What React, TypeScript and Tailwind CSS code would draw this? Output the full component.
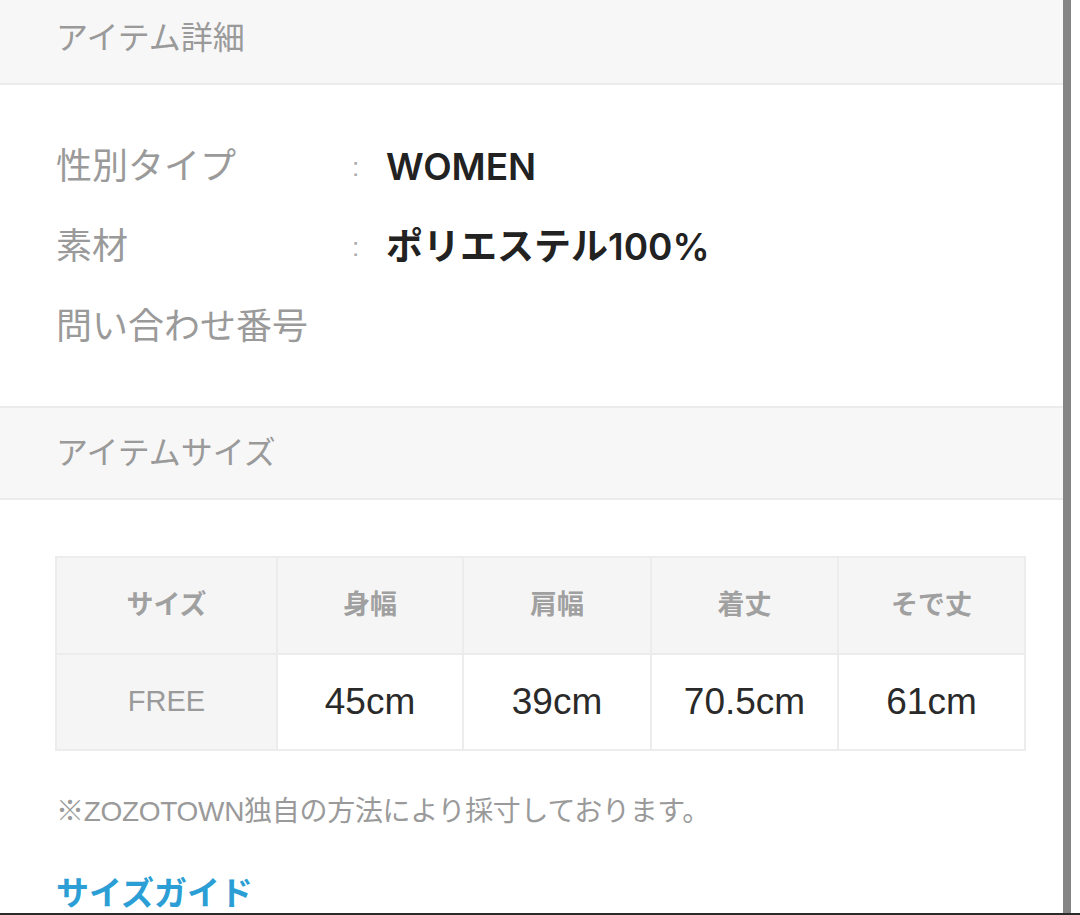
const FONT = { fontFamily: '"Liberation Sans", "Noto Sans CJK JP", sans-serif' }
const VALUE_FONT = { fontFamily: 'Inter, "Noto Sans CJK JP", sans-serif' }

const DETAILS = [
  { label: '性別タイプ', value: 'WOMEN' },
  { label: '素材', value: 'ポリエステル100%' },
  { label: '問い合わせ番号', value: '' },
]

const COLUMNS = ['身幅', '肩幅', '着丈', 'そで丈']
const SIZES = [{ size: 'FREE', values: ['45cm', '39cm', '70.5cm', '61cm'] }]

function SectionHeader({ title, className = '' }: { title: string; className?: string }) {
  return (
    <div className={`flex items-center bg-[#f7f7f7] pl-14 text-[32px] text-[#9a9a9a] ${className}`}>
      {title}
    </div>
  )
}

export default function App() {
  return (
    <div className="flex h-[915px] flex-col overflow-hidden bg-white" style={FONT}>
      <div className="flex min-h-0 flex-1">
        <div className="flex w-[1063px] flex-col">
          <SectionHeader title="アイテム詳細" className="h-[85px] shrink-0 border-b-2 border-[#ebebeb] pb-[8px]" />

          <div className="flex flex-col pt-[42px] pb-[39px] pl-14">
            {DETAILS.map((row) => (
              <div key={row.label} className="flex h-20 items-center">
                <div className="w-[296px] text-[36px] text-[#9a9a9a]">{row.label}</div>
                {row.value && (
                  <>
                    <div className="w-[34px] text-[26px] text-[#aaaaaa]">:</div>
                    <div className="text-[37px] font-semibold text-[#222]" style={VALUE_FONT}>
                      {row.value}
                    </div>
                  </>
                )}
              </div>
            ))}
          </div>

          <SectionHeader title="アイテムサイズ" className="h-[94px] shrink-0 border-y-2 border-[#ebebeb]" />

          <div className="pt-[56px] pr-14 pl-[55px]">
            <table className="w-[969px] table-fixed border-collapse text-center">
              <colgroup>
                <col className="w-[221px]" />
                <col className="w-[186px]" />
                <col className="w-[188px]" />
                <col className="w-[187px]" />
                <col className="w-[187px]" />
              </colgroup>
              <thead>
                <tr className="h-[97px] bg-[#f5f5f5]">
                  <th className="border-2 border-[#ececec] text-[27px] font-semibold text-[#a0a0a0]">サイズ</th>
                  {COLUMNS.map((col) => (
                    <th key={col} className="border-2 border-[#ececec] text-[27px] font-semibold text-[#a0a0a0]">
                      {col}
                    </th>
                  ))}
                </tr>
              </thead>
              <tbody>
                {SIZES.map((row) => (
                  <tr key={row.size} className="h-[96px]">
                    <td className="border-2 border-[#ececec] bg-[#f5f5f5] text-[29px] text-[#9a9a9a]">{row.size}</td>
                    {row.values.map((v, i) => (
                      <td key={i} className="border-2 border-[#ececec] text-[37px] text-[#2a2a2a]">
                        {v}
                      </td>
                    ))}
                  </tr>
                ))}
              </tbody>
            </table>

            <p className="mt-[40px] pl-px text-[28px] tracking-[-0.3px] text-[#9a9a9a]">
              ※ZOZOTOWN独自の方法により採寸しております。
            </p>
            <p className="mt-[36px] pl-px text-[33px] font-bold text-[#2b9fd5]">サイズガイド</p>
          </div>
        </div>
        <div className="w-[8px] bg-[#858585]" />
        <div className="flex-1" />
      </div>
      <div className="h-[2px] shrink-0 bg-[#2a2a2a]" />
    </div>
  )
}
